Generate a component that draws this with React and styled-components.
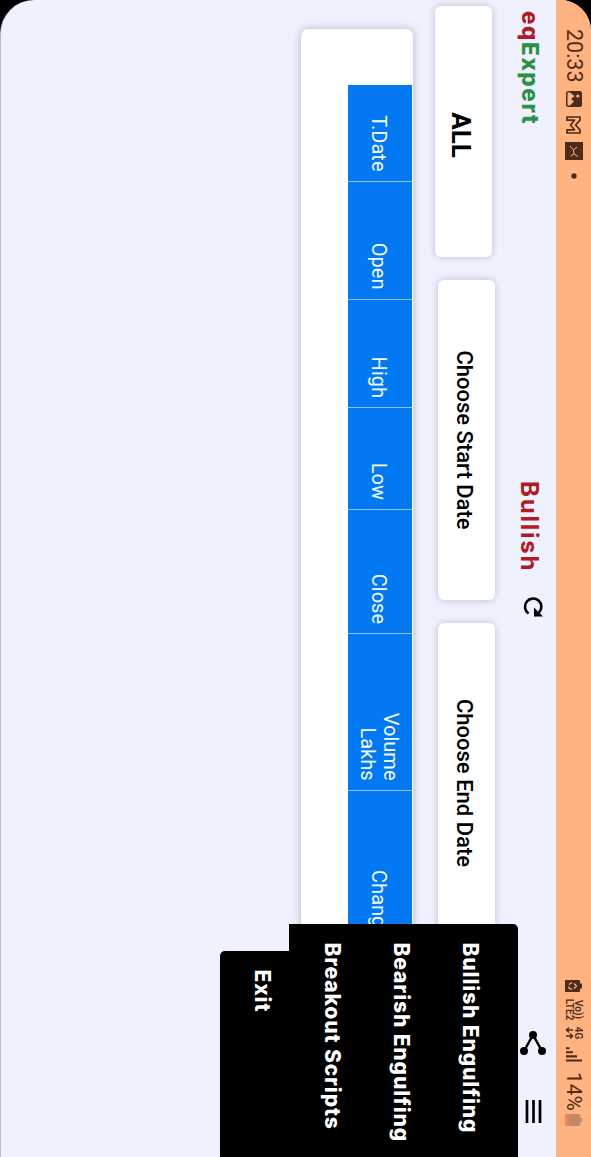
import React from "react";
import styled, { createGlobalStyle } from "styled-components";

const Global = createGlobalStyle`
  *, *::before, *::after { box-sizing: border-box; }
  html, body { margin: 0; padding: 0; background: #000; }
  body { width: 591px; height: 1157px; overflow: hidden; font-family: Roboto, "Liberation Sans", sans-serif; }
`;

/* The app runs in landscape on a device held upright. */
const Landscape = styled.div`
  position: relative;
  width: 1157px;
  height: 591px;
  overflow: hidden;
  transform-origin: 0 0;
  transform: translateX(591px) rotate(90deg);
  background: #eff1ff;
  border-bottom: 1px solid #b7b8cc;
  border-radius: 31px 0 0 34px;
  display: flex;
  flex-direction: column;
`;

const Device = styled.div`
  background: #000;
  width: 591px;
  height: 1157px;
  overflow: hidden;
`;

const StatusBar = styled.div`
  height: 35px;
  flex: none;
  display: flex;
  justify-content: space-between;
  padding: 0 31px 0 29px;
  background: #ffb380;
  color: #4f2a17;
`;

const StatusGroup = styled.div`
  display: flex;
  align-items: center;
  height: 34px;
`;

const StatusText = styled.span`
  font-size: ${(p) => p.$size}px;
  line-height: 34px;
  width: ${(p) => p.$w}px;
  margin-right: ${(p) => p.$gap || 0}px;
  white-space: nowrap;
`;

const Network = styled.div`
  display: flex;
  flex-direction: column;
  width: ${(p) => p.$w}px;
  margin-right: ${(p) => p.$gap}px;
  font-size: 10px;
  line-height: 9px;
  font-weight: 600;
  text-align: center;
  white-space: nowrap;
`;

const Icon = styled.svg`
  display: block;
  flex: none;
  width: ${(p) => p.$w}px;
  height: ${(p) => p.$h}px;
  margin-right: ${(p) => p.$gap || 0}px;
`;

const Header = styled.header`
  height: 45px;
  flex: none;
  display: grid;
  grid-template-columns: 470px 550px 1fr;
  padding-left: 11px;
`;

const HeaderGroup = styled.div`
  display: flex;
  align-items: center;
`;

const Brand = styled.div`
  padding-top: 6px;
  font: 800 22.5px/30px Inter, sans-serif;
  letter-spacing: 1.6px;
  color: ${(p) => p.$color};
  white-space: nowrap;
`;

const Title = styled.h1`
  margin: 0;
  padding-top: 9px;
  width: 115px;
  font: 700 24px/30px Inter, sans-serif;
  letter-spacing: 1.8px;
  color: #b01c26;
`;

const Filters = styled.div`
  display: flex;
  flex: none;
  height: 98px;
  padding: 15.5px 0 0 6px;
`;

const Filter = styled.div`
  flex: none;
  width: ${(p) => p.$w}px;
  height: 57.5px;
  margin: ${(p) => p.$top || 0}px 23px 0 0;
  padding-left: ${(p) => p.$indent || 0}px;
  border-radius: 6px;
  background: #fff;
  box-shadow: 0 0 7px rgba(60, 60, 90, 0.28);
  color: #000;
  text-align: center;
  font-size: ${(p) => (p.$strong ? 26 : 22)}px;
  font-weight: ${(p) => (p.$strong ? 700 : 500)};
  line-height: ${(p) => p.$lh}px;
`;

const TableCard = styled.section`
  flex: none;
  width: 1180px;
  height: 112px;
  margin-left: 29px;
  padding: 1px 0 0 55.5px;
  border-radius: 7px;
  background: #fff;
  box-shadow: 0 0 8px rgba(60, 60, 90, 0.35);
`;

const HeadRow = styled.div`
  display: flex;
  height: 64px;
`;

const HeadCell = styled.div`
  flex: none;
  width: ${(p) => p.$w}px;
  padding: 2px 9px 0 0;
  border-right: 1px solid #8cc8fb;
  background: #0279f2;
  color: #f2faff;
  display: flex;
  align-items: center;
  justify-content: flex-end;
  text-align: right;
  font-size: 20px;
  line-height: 23px;
`;

const Menu = styled.nav`
  position: absolute;
  top: 73px;
  right: 0;
  width: 233px;
  display: flex;
  flex-direction: column;
  align-items: flex-end;
`;

const MenuMain = styled.div`
  width: 100%;
  height: 229px;
  padding: 11px 0 0 18.5px;
  border-radius: 5px 0 0 0;
  background: #000;
`;

const MenuFoot = styled.div`
  width: 206px;
  height: 69px;
  padding: 0 0 0 18.5px;
  border-radius: 0 0 0 5px;
  background: #000;
`;

const MenuItem = styled.div`
  height: 69px;
  color: #fff;
  font: 800 21px/${(p) => p.$lh || 74}px Inter, sans-serif;
  letter-spacing: 0.9px;
  white-space: nowrap;
`;

const columns = [
  ["T.Date", 97],
  ["Open", 118],
  ["High", 108.5],
  ["Low", 102],
  ["Close", 124],
  [<>Volume<br />Lakhs</>, 156.5],
  ["Change %", 177],
];

export default function App() {
  return (
    <Device>
      <Global />
      <Landscape>
        <StatusBar>
          <StatusGroup>
            <StatusText $size={21.5} $w={51} $gap={11}>20:33</StatusText>
            <Icon $w={16} $h={16} $gap={9} viewBox="0 0 16 16">
              <rect width="16" height="16" rx="2.500" fill="#4f2a17" />
              <path d="M1.500 13.500V12L5 7.500l3 3.500 2.500-3 4 4v1.500q0 1-1 1h-11q-1 0-1-1z" fill="#ffb380" />
              <circle cx="5" cy="4.200" r="1.600" fill="#ffb380" />
            </Icon>
            <Icon $w={18} $h={15} $gap={8} viewBox="0 0 18 15">
              <path d="M1 14V1h3.200L9 5.500 13.800 1H17v13h-3.200V6.500L9 10.500 4.200 6.500V14z" fill="none" stroke="#4f2a17" strokeWidth="1.700" strokeLinejoin="round" />
            </Icon>
            <Icon $w={18} $h={18} $gap={13} viewBox="0 0 18 18">
              <rect width="18" height="18" fill="#4f2a17" />
              <path d="M4 13l4-3.500 4-.5 2 3.500M8 9.500L5 6M12 9l2.500-4" fill="none" stroke="#f0b48c" strokeWidth="1" />
            </Icon>
            <Icon $w={6} $h={6} viewBox="0 0 6 6"><circle cx="3" cy="3" r="2.700" fill="#4f2a17" /></Icon>
          </StatusGroup>
          <StatusGroup>
            <Icon $w={12} $h={17} $gap={6} viewBox="0 0 12 17">
              <path d="M3.500 0h5v2H11q1 0 1 1v13q0 1-1 1H1q-1 0-1-1V3q0-1 1-1h2.500z" fill="#4f2a17" />
              <path d="M3.500 8L6 5.500 8.500 8M9.500 10L8 13H6.500M4.500 13L2.500 10" fill="none" stroke="#ffb380" strokeWidth="1.300" />
            </Icon>
            <Network $w={23} $gap={5}><span>Vo))</span><span>LTE2</span></Network>
            <Network $w={14} $gap={7}>
              <span>4G</span>
              <Icon $w={14} $h={9} viewBox="0 0 14 9">
                <path d="M4 1v6.500M1.500 5L4 7.500 6.500 5M10 8V1.500M7.500 4L10 1.500 12.500 4" fill="none" stroke="#4f2a17" strokeWidth="1.500" />
              </Icon>
            </Network>
            <Icon $w={15} $h={16} $gap={10} viewBox="0 0 15 16">
              <path d="M1.200 12.500V16M5.300 9v7M9.400 5v11M13.500 0v16" stroke="#4f2a17" strokeWidth="2.100" />
            </Icon>
            <StatusText $size={21} $w={39} $gap={3}>14%</StatusText>
            <Icon $w={12} $h={17} viewBox="0 0 12 17">
              <path d="M3.500 0h5v2H11q1 0 1 1v13q0 1-1 1H1q-1 0-1-1V3q0-1 1-1h2.500z" fill="#c18a62" />
              <path d="M0 13h12v3q0 1-1 1H1q-1 0-1-1z" fill="#e8865c" />
            </Icon>
          </StatusGroup>
        </StatusBar>
        <Header>
          <HeaderGroup>
            <Brand $color="#b01c26">eq</Brand>
            <Brand $color="#2b9144">Expert</Brand>
          </HeaderGroup>
          <HeaderGroup>
            <Title>Bullish</Title>
            <Icon $w={21} $h={21} viewBox="0 0 21 21">
              <path d="M17.500 15.500A8.200 8.200 0 1 1 16.500 5" fill="none" stroke="#000" strokeWidth="2.600" />
              <path d="M20.500 1v9h-9z" fill="#000" />
            </Icon>
          </HeaderGroup>
          <HeaderGroup>
            <Icon $w={25} $h={26} $gap={44} viewBox="0 0 25 26">
              <path d="M20 4L4 13l16 9" fill="none" stroke="#000" strokeWidth="2.500" />
              <circle cx="20" cy="4" r="4" /><circle cx="4" cy="13" r="4" /><circle cx="20" cy="22" r="4" />
            </Icon>
            <Icon $w={23} $h={17} viewBox="0 0 23 17">
              <path d="M0 2h23M0 8.500h23M0 15h23" stroke="#000" strokeWidth="2.700" />
            </Icon>
          </HeaderGroup>
        </Header>
        <Filters>
          <Filter $w={251} $top={3} $strong $indent={7} $lh={63}>ALL</Filter>
          <Filter $w={320} $lh={62}>Choose Start Date</Filter>
          <Filter $w={320} $lh={62}>Choose End Date</Filter>
        </Filters>
        <TableCard>
          <HeadRow>
            {columns.map(([label, w], i) => (
              <HeadCell key={i} $w={w}><span>{label}</span></HeadCell>
            ))}
          </HeadRow>
        </TableCard>
        <Menu>
          <MenuMain>
            <MenuItem>Bullish Engulfing</MenuItem>
            <MenuItem>Bearish Engulfing</MenuItem>
            <MenuItem>Breakout Scripts</MenuItem>
          </MenuMain>
          <MenuFoot>
            <MenuItem $lh={53}>Exit</MenuItem>
          </MenuFoot>
        </Menu>
      </Landscape>
    </Device>
  );
}
